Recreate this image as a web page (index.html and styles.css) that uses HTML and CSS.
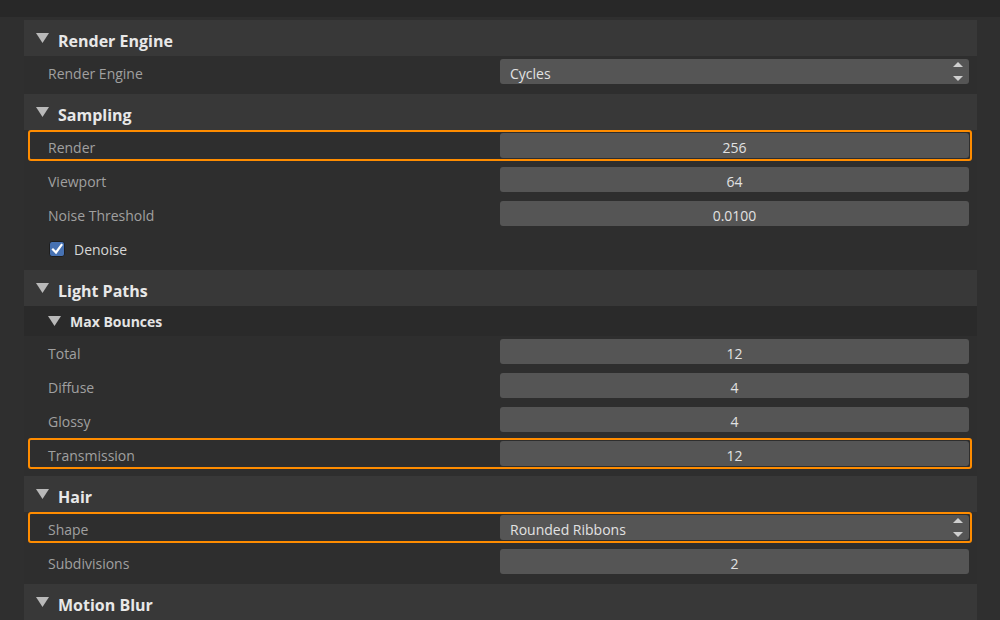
FILE: index.html
```html
<!DOCTYPE html>
<html>
<head>
<meta charset="utf-8">
<link rel="stylesheet" href="styles.css">
</head>
<body>
<div class="topbar"></div>
<div class="panel">

  <div class="section">
    <div class="section-header"><svg class="tri" width="13" height="10" viewBox="0 0 13 10"><polygon points="0,0 13,0 6.5,10"/></svg><span class="title">Render Engine</span></div>
    <div class="section-body">
      <div class="row"><span class="label">Render Engine</span><div class="field select"><span class="val">Cycles</span><svg class="updown" width="10" height="19" viewBox="0 0 10 19"><polygon points="0,5 10,5 5,0"/><polygon points="0,14 10,14 5,19"/></svg></div></div>
    </div>
  </div>

  <div class="section">
    <div class="section-header"><svg class="tri" width="13" height="10" viewBox="0 0 13 10"><polygon points="0,0 13,0 6.5,10"/></svg><span class="title">Sampling</span></div>
    <div class="section-body">
      <div class="row active"><span class="label">Render</span><div class="field num"><span class="val">256</span></div></div>
      <div class="row"><span class="label">Viewport</span><div class="field num"><span class="val">64</span></div></div>
      <div class="row"><span class="label">Noise Threshold</span><div class="field num"><span class="val">0.0100</span></div></div>
      <div class="row"><span class="check-wrap"><span class="checkbox"><svg width="12" height="12" viewBox="0 0 12 12"><path d="M2 6.5 L5 9.5 L10.5 2" fill="none" stroke="#fff" stroke-width="2.2" stroke-linecap="square"/></svg></span><span class="check-label">Denoise</span></span></div>
    </div>
  </div>

  <div class="section">
    <div class="section-header"><svg class="tri" width="13" height="10" viewBox="0 0 13 10"><polygon points="0,0 13,0 6.5,10"/></svg><span class="title">Light Paths</span></div>
    <div class="section-body">
      <div class="sub-header"><svg class="tri" width="13" height="10" viewBox="0 0 13 10"><polygon points="0,0 13,0 6.5,10"/></svg><span class="sub-title">Max Bounces</span></div>
      <div class="row"><span class="label">Total</span><div class="field num"><span class="val">12</span></div></div>
      <div class="row"><span class="label">Diffuse</span><div class="field num"><span class="val">4</span></div></div>
      <div class="row"><span class="label">Glossy</span><div class="field num"><span class="val">4</span></div></div>
      <div class="row active"><span class="label">Transmission</span><div class="field num"><span class="val">12</span></div></div>
    </div>
  </div>

  <div class="section">
    <div class="section-header"><svg class="tri" width="13" height="10" viewBox="0 0 13 10"><polygon points="0,0 13,0 6.5,10"/></svg><span class="title">Hair</span></div>
    <div class="section-body">
      <div class="row active"><span class="label">Shape</span><div class="field select"><span class="val">Rounded Ribbons</span><svg class="updown" width="10" height="19" viewBox="0 0 10 19"><polygon points="0,5 10,5 5,0"/><polygon points="0,14 10,14 5,19"/></svg></div></div>
      <div class="row"><span class="label">Subdivisions</span><div class="field num"><span class="val">2</span></div></div>
    </div>
  </div>

  <div class="section">
    <div class="section-header"><svg class="tri" width="13" height="10" viewBox="0 0 13 10"><polygon points="0,0 13,0 6.5,10"/></svg><span class="title">Motion Blur</span></div>
  </div>

</div>
</body>
</html>
```

FILE: styles.css
```css
* { box-sizing: border-box; }
html, body { margin: 0; padding: 0; }
body {
  background: #2f2f2f;
  font-family: "Open Sans", "Noto Sans", sans-serif;
  width: 1000px;
  height: 620px;
  overflow: hidden;
}
.topbar {
  height: 17px;
  background: #282828;
}
.panel {
  margin: 3px 23px 0 24px;
}
.section-header {
  height: 36px;
  background: #383838;
  display: flex;
  align-items: center;
  padding-left: 12px;
}
.tri { fill: #b9b9b9; flex: none; }
.title {
  margin-left: 9px;
  padding-top: 6px;
  font-size: 16px;
  font-weight: 700;
  color: #e8e8e8;
}
.section-body {
  background: #2e2e2e;
  padding-bottom: 4px;
}
.sub-header {
  height: 30px;
  background: #2a2a2a;
  display: flex;
  align-items: center;
  padding-left: 24px;
}
.sub-title {
  margin-left: 9px;
  font-size: 14px;
  font-weight: 700;
  color: #e4e4e4;
}
.row {
  height: 31px;
  margin: 0 5px 3px 4px;
  border: 2px solid transparent;
  border-radius: 3px;
  padding: 1px;
  display: grid;
  grid-template-columns: 1fr 1fr;
  align-items: center;
}
.row.active { border-color: #ff8c00; }
.label {
  padding-left: 17px;
  padding-top: 4px;
  font-size: 14px;
  color: #a0a0a0;
}
.field {
  height: 25px;
  background: #555555;
  border-radius: 3px;
  font-size: 14px;
  color: #e2e2e2;
  display: flex;
  align-items: center;
}
.val { padding-top: 4px; }
.field.num { justify-content: center; }
.field.select {
  justify-content: space-between;
  padding: 0 6px 0 10px;
}
.updown { fill: #cfcfcf; }
.check-wrap {
  display: flex;
  align-items: center;
  padding-left: 18px;
  padding-top: 2px;
}
.checkbox {
  width: 16px;
  height: 16px;
  background: #4772b3;
  border: 1px solid #1e1e1e;
  border-radius: 3px;
  display: flex;
  align-items: center;
  justify-content: center;
}
.check-label {
  margin-left: 9px;
  padding-top: 2px;
  font-size: 14px;
  color: #d6d6d6;
}
```
